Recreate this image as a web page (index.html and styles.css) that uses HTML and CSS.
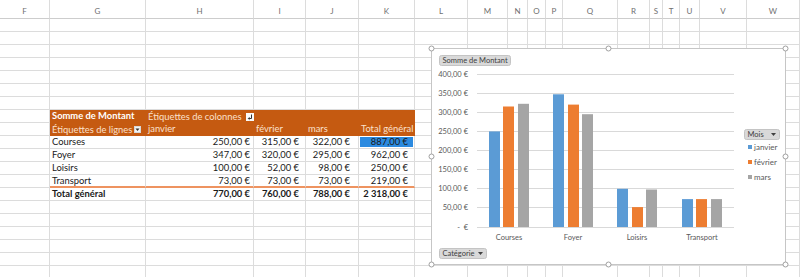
FILE: index.html
```html
<!DOCTYPE html>
<html lang="fr">
<head>
    <meta charset="UTF-8">
    <meta name="viewport" content="width=device-width, initial-scale=1.0">
    <title>Tableau croisé dynamique</title>
    <link rel="stylesheet" href="styles.css">
</head>
<body>
    <div class="sheet">
        <!-- Column headers and gridlines -->
        <div class="layer cells">
            <div class="colhead">F</div>
            <div class="colhead">G</div>
            <div class="colhead">H</div>
            <div class="colhead">I</div>
            <div class="colhead">J</div>
            <div class="colhead">K</div>
            <div class="colhead">L</div>
            <div class="colhead">M</div>
            <div class="colhead">N</div>
            <div class="colhead">O</div>
            <div class="colhead">P</div>
            <div class="colhead">Q</div>
            <div class="colhead">R</div>
            <div class="colhead">S</div>
            <div class="colhead">T</div>
            <div class="colhead">U</div>
            <div class="colhead">V</div>
            <div class="colhead">W</div>
            <div class="col"></div><div class="col"></div><div class="col"></div>
            <div class="col"></div><div class="col"></div><div class="col"></div>
            <div class="col"></div><div class="col"></div><div class="col"></div>
            <div class="col"></div><div class="col"></div><div class="col"></div>
            <div class="col"></div><div class="col"></div><div class="col"></div>
            <div class="col"></div><div class="col"></div><div class="col"></div>
        </div>

        <!-- Pivot table -->
        <div class="layer objects">
            <div class="pivot">
                <div class="pv pv-hd pv-title">Somme de Montant</div>
                <div class="pv pv-hd pv-span">
                    <span>Étiquettes de colonnes</span>
                    <svg class="pv-icon" width="8" height="8" viewBox="0 0 8 8">
                        <rect width="8" height="8" fill="#fafafa"/>
                        <path d="M5.5 1.5V5.5H2.5M3.5 4.3L2.3 5.5L3.5 6.7" fill="none" stroke="#333" stroke-width="1"/>
                    </svg>
                </div>

                <div class="pv pv-hd pv-rows">
                    <span>Étiquettes de lignes</span>
                    <svg class="pv-icon" width="7" height="7" viewBox="0 0 7 7">
                        <rect x="0.5" y="0.5" width="6" height="6" fill="#f4f4f4" stroke="#d8d8d8"/>
                        <path d="M1.5 2.5H5.5L3.5 5Z" fill="#333"/>
                    </svg>
                </div>
                <div class="pv pv-hd">janvier</div>
                <div class="pv pv-hd">février</div>
                <div class="pv pv-hd">mars</div>
                <div class="pv pv-hd">Total général</div>

                <div class="pv">Courses</div>
                <div class="pv num mh">250,00 €</div>
                <div class="pv num mi">315,00 €</div>
                <div class="pv num mj">322,00 €</div>
                <div class="pv num mk sel">887,00 €</div>

                <div class="pv">Foyer</div>
                <div class="pv num mh">347,00 €</div>
                <div class="pv num mi">320,00 €</div>
                <div class="pv num mj">295,00 €</div>
                <div class="pv num mk">962,00 €</div>

                <div class="pv">Loisirs</div>
                <div class="pv num mh">100,00 €</div>
                <div class="pv num mi">52,00 €</div>
                <div class="pv num mj">98,00 €</div>
                <div class="pv num mk">250,00 €</div>

                <div class="pv last">Transport</div>
                <div class="pv num mh last">73,00 €</div>
                <div class="pv num mi last">73,00 €</div>
                <div class="pv num mj last">73,00 €</div>
                <div class="pv num mk last">219,00 €</div>

                <div class="pv total">Total général</div>
                <div class="pv num mh total">770,00 €</div>
                <div class="pv num mi total">760,00 €</div>
                <div class="pv num mj total">788,00 €</div>
                <div class="pv num mk total">2 318,00 €</div>
            </div>
        </div>

        <!-- Pivot chart floating over the sheet -->
        <svg class="chart" width="356" height="218" viewBox="0 0 356 218">
            <rect class="chart-bg" x="0.5" y="0.5" width="354" height="216"/>

            <g class="field">
                <rect x="8.5" y="7.5" width="71" height="10" rx="2"/>
                <text x="11.5" y="15.2">Somme de Montant</text>
            </g>

            <g class="grid">
                <line x1="46" x2="303" y1="26.5" y2="26.5"/>
                <line x1="46" x2="303" y1="45.5" y2="45.5"/>
                <line x1="46" x2="303" y1="64.5" y2="64.5"/>
                <line x1="46" x2="303" y1="83.5" y2="83.5"/>
                <line x1="46" x2="303" y1="102.5" y2="102.5"/>
                <line x1="46" x2="303" y1="121.5" y2="121.5"/>
                <line x1="46" x2="303" y1="140.5" y2="140.5"/>
                <line x1="46" x2="303" y1="159.5" y2="159.5"/>
                <line x1="46" x2="303" y1="179.5" y2="179.5"/>
            </g>

            <g class="axis">
                <text x="37" y="29">400,00 €</text>
                <text x="37" y="48">350,00 €</text>
                <text x="37" y="67">300,00 €</text>
                <text x="37" y="86">250,00 €</text>
                <text x="37" y="105">200,00 €</text>
                <text x="37" y="124">150,00 €</text>
                <text x="37" y="143">100,00 €</text>
                <text x="37" y="162">50,00 €</text>
                <text x="37" y="182">€</text>
                <text x="29" y="182">-</text>
            </g>

            <g class="bars">
                <rect class="s1" x="58" y="83.4" width="11" height="95.6"/>
                <rect class="s2" x="72" y="58.5" width="11" height="120.5"/>
                <rect class="s3" x="87" y="55.8" width="11" height="123.2"/>

                <rect class="s1" x="122" y="46.3" width="11" height="132.7"/>
                <rect class="s2" x="137" y="56.6" width="11" height="122.4"/>
                <rect class="s3" x="151" y="66.2" width="11" height="112.8"/>

                <rect class="s1" x="186" y="140.8" width="11" height="38.2"/>
                <rect class="s2" x="201" y="159.1" width="11" height="19.9"/>
                <rect class="s3" x="215" y="141.5" width="11" height="37.5"/>

                <rect class="s1" x="251" y="151.1" width="11" height="27.9"/>
                <rect class="s2" x="265" y="151.1" width="11" height="27.9"/>
                <rect class="s3" x="280" y="151.1" width="11" height="27.9"/>
            </g>

            <g class="cats">
                <text x="78" y="192">Courses</text>
                <text x="142" y="192">Foyer</text>
                <text x="206" y="192">Loisirs</text>
                <text x="271" y="192">Transport</text>
            </g>

            <g class="field">
                <rect x="8.5" y="200.5" width="47" height="10" rx="2"/>
                <text x="11.5" y="208.2">Catégorie</text>
                <path class="tri" d="M47 204H52L49.5 207Z"/>
            </g>

            <g class="field">
                <rect x="313.5" y="81.5" width="35" height="10" rx="2"/>
                <text x="316.5" y="89.2">Mois</text>
                <path class="tri" d="M340 85H345L342.5 88Z"/>
            </g>

            <g class="legend">
                <rect class="s1" x="317" y="97" width="4" height="4"/>
                <text x="323" y="101.8">janvier</text>
                <rect class="s2" x="317" y="112" width="4" height="4"/>
                <text x="323" y="116.8">février</text>
                <rect class="s3" x="317" y="127" width="4" height="4"/>
                <text x="323" y="131.8">mars</text>
            </g>

            <g class="handles">
                <circle cx="0.5" cy="0.5" r="2.5"/>
                <circle cx="177.5" cy="0.5" r="2.5"/>
                <circle cx="354.5" cy="0.5" r="2.5"/>
                <circle cx="0.5" cy="108.5" r="2.5"/>
                <circle cx="354.5" cy="108.5" r="2.5"/>
                <circle cx="0.5" cy="216.5" r="2.5"/>
                <circle cx="177.5" cy="216.5" r="2.5"/>
                <circle cx="354.5" cy="216.5" r="2.5"/>
            </g>
        </svg>
    </div>
</body>
</html>
```

FILE: styles.css
```css
body {
    margin: 0;
    background-color: white;
    font-family: Lato, "Liberation Sans", sans-serif;
    overflow: hidden;
}
.sheet {
    --cols: 50px 96px 108px 52px 53px 56px 53px 40px 20px 18px 17px 55px 32px 13px 17px 20px 47px 53px;
    position: relative;
    display: grid;
    width: 800px;
    height: 277px;
    overflow: hidden;
}
.layer {
    grid-area: 1 / 1;
    display: grid;
    grid-template-columns: var(--cols);
    grid-template-rows: 19px repeat(20, 13px);
}
.colhead {
    grid-row: 1;
    box-sizing: border-box;
    padding-top: 6px;
    font-size: 8px;
    line-height: 11px;
    color: #6f6f6f;
    text-align: center;
    border-right: 1px solid #dcdcdc;
    border-bottom: 1px solid #cdcdcd;
}
.col {
    grid-row: 2 / -1;
    box-sizing: border-box;
    border-right: 1px solid #dcdcdc;
    background: repeating-linear-gradient(to bottom, transparent 0 12px, #dcdcdc 12px 13px);
}

/* pivot table */
.pivot {
    grid-column: 2 / 7;
    grid-row: 9 / 16;
    display: grid;
    grid-template-columns: 96px 108px 52px 53px 56px;
    grid-auto-rows: 13px;
    font-size: 9.4px;
    line-height: 12px;
}
.pv {
    box-sizing: border-box;
    padding: 0 2px;
    white-space: nowrap;
    overflow: hidden;
    color: #1a1a1a;
    background-color: white;
    border-right: 1px solid #dcdcdc;
    border-bottom: 1px solid #dcdcdc;
}
.pv-hd {
    background-color: #c55a11;
    color: #fbe0cc;
    border: none;
}
.pv-title {
    color: white;
    font-weight: bold;
}
.pv-span {
    grid-column: span 4;
    display: flex;
    align-items: center;
    gap: 5px;
}
.pv-rows {
    display: flex;
    align-items: center;
    justify-content: space-between;
    padding-right: 5px;
}
.pv-icon {
    flex: none;
}
.num {
    text-align: right;
}
.mh { padding-right: 3px; }
.mi { padding-right: 6px; }
.mj { padding-right: 8px; }
.mk { padding-right: 6px; }
.sel {
    background-color: #2b8ae0;
    box-shadow: inset 0 0 0 1px white;
}
.last {
    border-bottom: 2px solid #ee9360;
}
.total {
    font-weight: bold;
}

/* pivot chart */
.chart {
    position: absolute;
    left: 431px;
    top: 48px;
    overflow: visible;
    font-family: Lato, "Liberation Sans", sans-serif;
}
.chart-bg {
    fill: white;
    stroke: #c6c6c6;
}
.chart text {
    font-size: 7.5px;
    fill: #595959;
}
.field rect {
    fill: #d9d9d9;
    stroke: #c4c4c4;
}
.field text {
    fill: #404040;
}
.tri {
    fill: #404040;
}
.grid line {
    stroke: #d9d9d9;
    stroke-width: 1;
}
.axis text {
    text-anchor: end;
}
.cats text {
    text-anchor: middle;
}
.s1 { fill: #5b9bd5; }
.s2 { fill: #ed7d31; }
.s3 { fill: #a5a5a5; }
.legend text {
    font-size: 8px;
}
.handles circle {
    fill: white;
    stroke: #a0a0a0;
}
```
